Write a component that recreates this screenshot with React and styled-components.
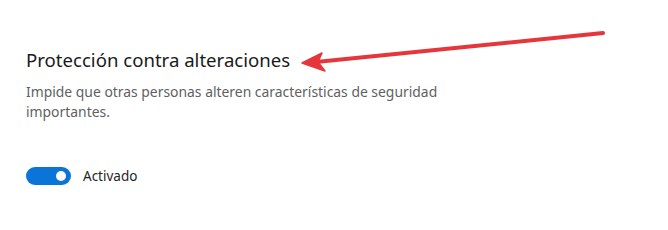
import React, { useState } from 'react';
import styled, { createGlobalStyle } from 'styled-components';

const GlobalStyle = createGlobalStyle`
  html, body {
    margin: 0;
    padding: 0;
    background: #ffffff;
  }
`;

const Page = styled.div`
  position: relative;
  width: 668px;
  height: 230px;
  box-sizing: border-box;
  padding: 44px 0 0 26px;
  font-family: "Noto Sans", "Liberation Sans", sans-serif;
  background: #ffffff;
  overflow: hidden;
`;

const Title = styled.h2`
  margin: 0;
  font-size: 18.6px;
  font-weight: 400;
  line-height: 32px;
  color: #1a1a1a;
`;

const Description = styled.p`
  margin: 6px 0 0;
  width: 440px;
  font-size: 13.9px;
  line-height: 20px;
  color: #5f5f5f;
`;

const ToggleRow = styled.div`
  display: flex;
  align-items: center;
  gap: 12px;
  margin-top: 45px;
`;

const Switch = styled.button`
  position: relative;
  width: 45px;
  height: 18px;
  padding: 0;
  border: none;
  border-radius: 9px;
  background: ${props => (props.$on ? '#0a74d8' : '#c8c8c8')};
  cursor: pointer;

  &::after {
    content: '';
    position: absolute;
    top: 4px;
    left: ${props => (props.$on ? '30px' : '5px')};
    width: 10px;
    height: 10px;
    border-radius: 50%;
    background: #ffffff;
  }
`;

const Label = styled.span`
  font-size: 13.5px;
  color: #1f1f1f;
`;

const Arrow = styled.svg`
  position: absolute;
  left: 0;
  top: 0;
  pointer-events: none;
`;

export default function App() {
  const [on, setOn] = useState(true);

  return (
    <Page>
      <GlobalStyle />
      <Title>Protección contra alteraciones</Title>
      <Description>
        Impide que otras personas alteren características de seguridad importantes.
      </Description>
      <ToggleRow>
        <Switch $on={on} onClick={() => setOn(!on)} aria-label="Protección contra alteraciones" />
        <Label>{on ? 'Activado' : 'Desactivado'}</Label>
      </ToggleRow>
      <Arrow width="668" height="230" viewBox="0 0 668 230">
        <line x1="603" y1="33" x2="316" y2="62" stroke="#e5363c" strokeWidth="4" strokeLinecap="round" />
        <path d="M302 63 L322 53 L318 62 L325 71 Z" fill="#e5363c" stroke="#e5363c" strokeWidth="1.5" strokeLinejoin="round" />
      </Arrow>
    </Page>
  );
}
